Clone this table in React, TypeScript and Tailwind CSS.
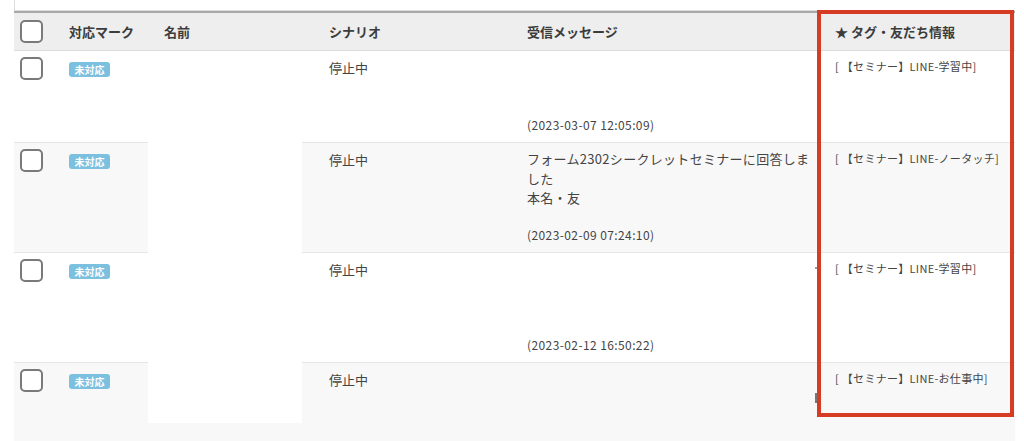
import React from "react";

type Row = {
  bg: string;
  height: string;
  message: string[];
  time: string;
  tag: string;
};

const rows: Row[] = [
  { bg: "bg-white", height: "h-[91px]", message: [], time: "(2023-03-07 12:05:09)", tag: "[ 【セミナー】LINE-学習中]" },
  {
    bg: "bg-[#f8f8f8]",
    height: "h-[110px]",
    message: ["フォーム2302シークレットセミナーに回答しました", "本名・友"],
    time: "(2023-02-09 07:24:10)",
    tag: "[ 【セミナー】LINE-ノータッチ]",
  },
  { bg: "bg-white", height: "h-[110px]", message: [], time: "(2023-02-12 16:50:22)", tag: "[ 【セミナー】LINE-学習中]" },
  { bg: "bg-[#f8f8f8]", height: "h-[110px]", message: [], time: "", tag: "[ 【セミナー】LINE-お仕事中]" },
];

const cols = "grid grid-cols-[41px_95px_165px_198px_308px_194px]";

const Checkbox = () => (
  <div className="h-[23px] w-[23px] rounded-[5px] border-2 border-[#7a7a7a] bg-white" />
);

const App = () => {
  return (
    <div
      className="relative h-[441px] w-[1024px] overflow-hidden bg-white text-[#444]"
      style={{ fontFamily: '"Noto Sans CJK JP", "Noto Sans", sans-serif' }}
    >
      <div className="ml-[14px] w-[1001px]">
        {/* search box remnant */}
        <div className="h-[11px] border-b border-l border-[#dcdcdc]" />

        {/* Header */}
        <div className={`${cols} h-[40px] items-center border-t-2 border-b border-t-[#a9a9a9] border-b-[#dcdcdc] bg-[#eeeeee] text-[13px] font-bold text-[#3c3c3c]`}>
          <div className="pl-[6px]">
            <Checkbox />
          </div>
          <div className="pl-[14px]">対応マーク</div>
          <div className="pl-[14px]">名前</div>
          <div className="pl-[14px]">シナリオ</div>
          <div className="pl-[14px]">受信メッセージ</div>
          <div className="pl-[14px]">★ タグ・友だち情報</div>
        </div>

        {/* Rows */}
        {rows.map((r, i) => (
          <div key={i} className={`${cols} ${r.height} ${r.bg} ${i > 0 ? "border-t border-[#e6e6e6]" : ""}`}>
            <div className="pl-[6px] pt-[6px]">
              <Checkbox />
            </div>
            <div className="pl-[14px] pt-[11px]">
              <div className="h-[15px] w-[41px] rounded-[3px] bg-[#7bc0df] text-center text-[10px] font-bold leading-[15px] text-white">
                未対応
              </div>
            </div>
            <div />
            <div className="pl-[14px] pt-[7px] text-[13px] leading-[20px]">停止中</div>
            <div className="flex flex-col justify-between pb-[9px] pl-[14px] pr-[4px] pt-[6px] text-[13px] leading-[19.5px] tracking-[0.3px]">
              <div>
                {r.message.map((m, j) => (
                  <div key={j}>{m}</div>
                ))}
              </div>
              <div className="text-[12px] leading-[16px] tracking-[0.4px]">{r.time}</div>
            </div>
            <div className="pl-[14px] pt-[7px] text-[11px] leading-[16px] tracking-[0.3px]">{r.tag}</div>
          </div>
        ))}
      </div>

      {/* redacted names */}
      <div className="absolute left-[148px] top-[142px] h-[281px] w-[154px] bg-white" />

      {/* small clipped glyph under annotation */}
      <div className="absolute left-[815px] top-[393px] h-[10px] w-[2px] bg-[#777]" />
      <div className="absolute left-[815px] top-[267px] h-[2px] w-[2px] bg-[#999]" />

      {/* annotation box */}
      <div className="absolute left-[817px] top-[10px] h-[407px] w-[197px] border-[4px] border-[#d63b24]" />
    </div>
  );
};

export default App;
